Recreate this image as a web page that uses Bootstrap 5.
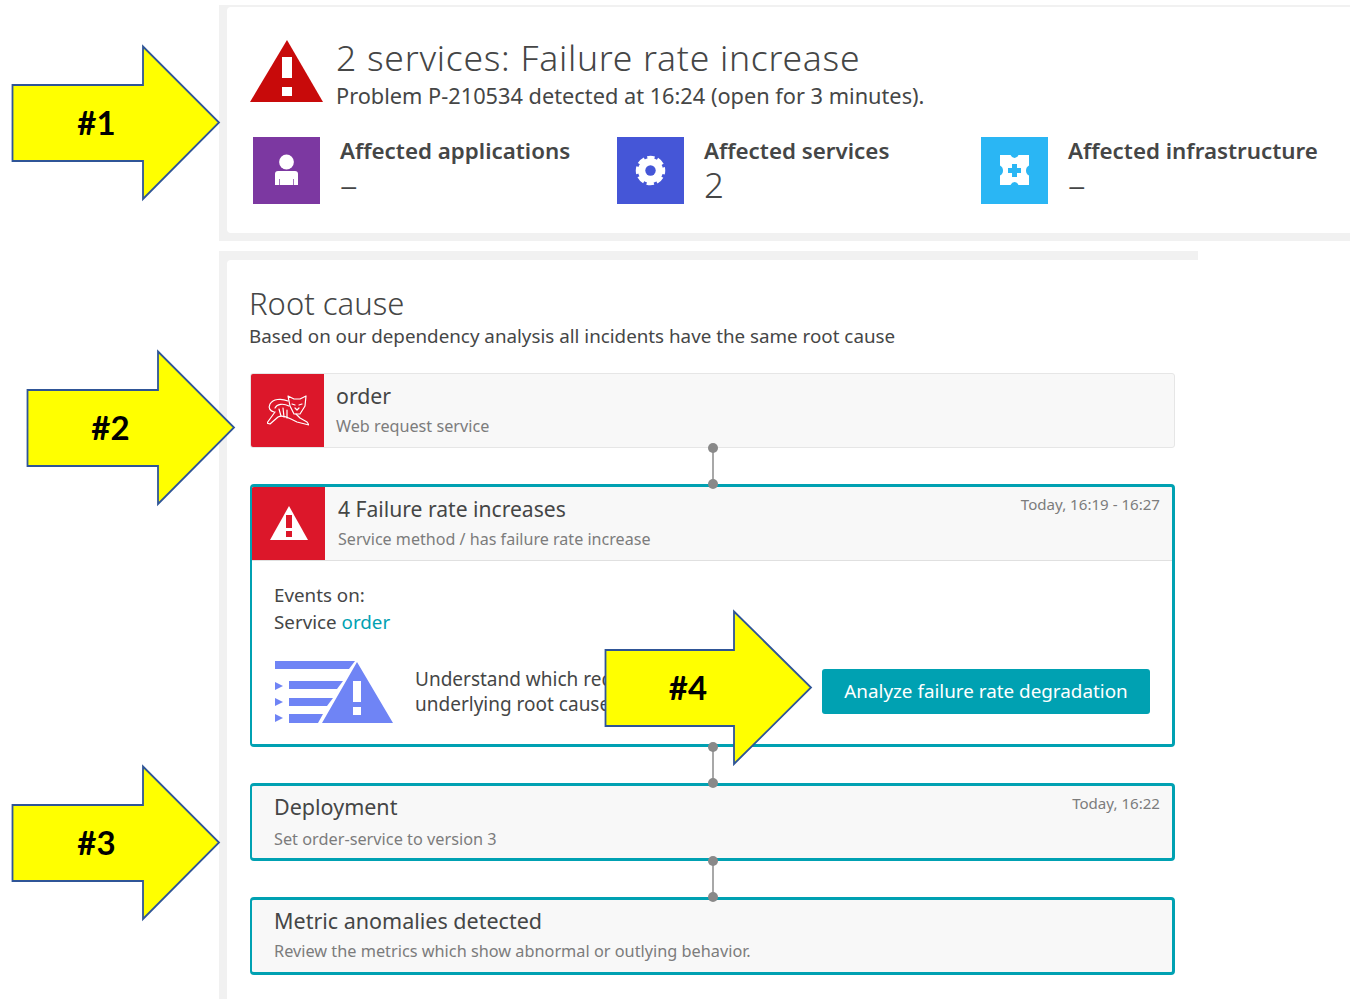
<!DOCTYPE html>
<html lang="en">
<head>
<meta charset="utf-8">
<title>Problem P-210534</title>
<link rel="stylesheet" href="https://cdn.jsdelivr.net/npm/bootstrap@5.3.0/dist/css/bootstrap.min.css">
<style>
html,body{height:999px;overflow:hidden}
body{background:#fff;font-family:"Noto Sans",sans-serif;color:#454646;position:relative}
.stage{padding:5px 0 0 219px;height:999px}
.summary-panel{background:#f1f1f1;padding:2px 0 8px 8px;margin-bottom:10px}
.summary-card{background:#fff;height:226px;border-radius:4px 0 0 4px;padding:29px 0 0 23px}
.title-text{font-size:35.500px;line-height:42px;font-weight:300;margin:0;letter-spacing:.73px}
.sub-text{font-size:21.750px;line-height:30px;margin-top:3px;color:#454646}
.alert-ico{width:74px;height:64px;flex:none;margin-right:12px;margin-top:4px}
.impact-row{margin-top:26px;padding-left:3px}
.impact-item{width:364px;flex:none}
.impact-ico{width:67px;height:67px;flex:none;margin-right:20px}
.impact-name{font-size:22.350px;line-height:28px;font-weight:600}
.impact-val{font-size:35px;line-height:40px;font-weight:300}
.cause-panel{background:#f1f1f1;width:979px;padding:9px 0 0 8px;height:748px}
.cause-card{background:#fff;height:739px;padding:22px 23px 0 23px;border-radius:4px 0 0 0}
.cause-title{font-size:31px;line-height:43px;font-weight:300;margin:0 0 0 -1px}
.cause-sub{font-size:18.800px;line-height:24px;margin:-1px 0 25px -1px}
.node{background:#f8f8f8;border:1px solid #e6e6e6;border-radius:3px;overflow:hidden}
.node-on{border:3px solid #00a1b2;border-left-width:2px;border-radius:4px}
.node-ico{width:73px;background:#dc172a;flex:none}
.node-name{font-size:21.300px;line-height:28px}
.node-desc{font-size:16.200px;line-height:22px;color:#7c7c7c}
.node-time{font-size:15.100px;line-height:20px;color:#7c7c7c}
.first-node{height:75px}
.first-text{padding:8px 0 0 12px}
.first-desc{margin-top:5px}
.fail-head{height:74px;border-bottom:1px solid #e0e0e0}
.fail-text{padding:8px 0 0 13px}
.fail-name{font-size:21.100px}
.fail-desc{font-size:16.100px;margin-top:5px}
.fail-time{padding:7px 12px 0 0}
.fail-body{background:#fff;height:183px;padding:21px 22px 0 22px}
.body-line{font-size:18.800px;line-height:27px}
.teal-link{color:#00a1b2;text-decoration:none}
.hint-row{margin-top:24px}
.hint-art{flex:none;margin-left:1px}
.hint-text{font-size:19px;line-height:25px;margin-left:22px;white-space:nowrap}
.teal-btn{background:#00a1b2;color:#fff;border:0;border-radius:3px;width:328px;height:45px;font-size:18.850px;padding:0;flex:none}
.teal-btn:hover{background:#00a1b2;color:#fff}
.link-gap{height:36px;align-items:center}
.link-dot{width:10px;height:10px;border-radius:50%;background:#898989;flex:none;margin:-5px 0;position:relative;z-index:2}
.link-line{width:2px;flex:1;background:#a8a8a8}
.plain-node{height:78px;padding:7px 12px 0 22px}
.plain-name{font-size:21.500px}
.plain-desc{font-size:16.300px;margin-top:7px}
.metric-desc{font-size:16.300px;margin-top:5px}
.arrow-mark{position:absolute;z-index:5}
.arrow-mark svg{display:block;overflow:visible}
.arrow-label{position:absolute;inset:0;font-family:Lato,sans-serif;font-weight:700;font-size:33px;color:#000;display:flex;align-items:center;justify-content:center}
.label-a{padding-right:38px}
.label-b{padding-right:40px}
.label-c{padding-right:38px}
.label-d{padding-right:40px}
</style>
</head>
<body>
<div class="stage">
  <section class="summary-panel">
    <div class="summary-card">
      <div class="d-flex">
        <svg class="alert-ico" viewBox="0 0 74 64"><path fill="#c80a0a" d="M37 0 73 62H0Z"/><path fill="#fff" d="M32 17H42V38H32ZM32 47H42V56H32Z"/></svg>
        <div>
          <h1 class="title-text">2 services: Failure rate increase</h1>
          <div class="sub-text">Problem P-210534 detected at 16:24 (open for 3 minutes).</div>
        </div>
      </div>
      <div class="d-flex impact-row">
        <div class="impact-item d-flex">
          <svg class="impact-ico" viewBox="0 0 67 67"><rect width="67" height="67" fill="#7c38a1"/><circle cx="33.500" cy="25" r="7.400" fill="#fff"/><path fill="#fff" d="M25 34H42Q45 34 45 37V48H22V37Q22 34 25 34Z"/><path stroke="#7c38a1" stroke-width=".7" d="M26.500 42V48M40.500 42V48"/></svg>
          <div><div class="impact-name">Affected applications</div><div class="impact-val">–</div></div>
        </div>
        <div class="impact-item d-flex">
          <svg class="impact-ico" viewBox="0 0 67 67"><rect width="67" height="67" fill="#4556d7"/><circle cx="33.500" cy="33.500" r="12.500" fill="#fff"/><circle cx="33.500" cy="33.500" r="13" fill="none" stroke="#fff" stroke-width="3.500" stroke-dasharray="7.200 3" stroke-dashoffset="3.500"/><circle cx="33.500" cy="33.500" r="5.200" fill="#4556d7"/></svg>
          <div><div class="impact-name">Affected services</div><div class="impact-val">2</div></div>
        </div>
        <div class="impact-item d-flex">
          <svg class="impact-ico" viewBox="0 0 67 67"><rect width="67" height="67" fill="#2ab6f4"/><path fill="#fff" d="M19 18H29.500Q31 21 33.500 21 36 21 37.500 18H48V28.500Q45 30 45 33.500 45 37 48 38.500V48H37.500Q36 45 33.500 45 31 45 29.500 48H19V38.500Q22 37 22 33.500 22 30 19 28.500Z"/><path fill="#2ab6f4" d="M31 27H36V31H40V36H36V40H31V36H27V31H31Z"/></svg>
          <div><div class="impact-name">Affected infrastructure</div><div class="impact-val">–</div></div>
        </div>
      </div>
    </div>
  </section>

  <section class="cause-panel">
    <div class="cause-card">
      <h2 class="cause-title">Root cause</h2>
      <div class="cause-sub">Based on our dependency analysis all incidents have the same root cause</div>

      <div class="node first-node d-flex">
        <div class="node-ico d-flex align-items-center justify-content-center">
          <svg width="42" height="31" viewBox="0 0 42 31" fill="none" stroke="#fff" stroke-width="1.200" stroke-linejoin="round" stroke-linecap="round"><path d="M21 1 27 4H33L39 1 38 11 33 19H27L23 11Z"/><path d="M25 9 28 10M32 10 35 9M28 13 30 15 32 13"/><path d="M21 6C14 3 6 4 3 9 1 13 3 16 7 17M22 11C16 8 10 9 8 13"/><path d="M8 17 0 28 3 29 11 22C15 20 20 22 24 24L30 27 42 30 40 27 33 23 29 19"/><path d="M12 14 14 21M16 13 17 22M20 15 20 23"/></svg>
        </div>
        <div class="first-text">
          <div class="node-name">order</div>
          <div class="node-desc first-desc">Web request service</div>
        </div>
      </div>

      <div class="link-gap d-flex flex-column"><span class="link-dot"></span><span class="link-line"></span><span class="link-dot"></span></div>

      <div class="node node-on">
        <div class="fail-head d-flex">
          <div class="node-ico d-flex align-items-center justify-content-center">
            <svg width="40" height="35" viewBox="0 0 40 35"><path fill="#fff" d="M20 0 39 34H1Z"/><path fill="#dc172a" d="M17 9H23V22H17ZM17 25H23V31H17Z"/></svg>
          </div>
          <div class="fail-text flex-grow-1">
            <div class="node-name fail-name">4 Failure rate increases</div>
            <div class="node-desc fail-desc">Service method / has failure rate increase</div>
          </div>
          <div class="node-time fail-time">Today, 16:19 - 16:27</div>
        </div>
        <div class="fail-body">
          <div class="body-line">Events on:</div>
          <div class="body-line">Service <a class="teal-link" href="#">order</a></div>
          <div class="d-flex align-items-center hint-row">
            <svg class="hint-art" width="118" height="63" viewBox="0 -1 118 63"><path fill="#6f84f5" d="M0 0H80L74 8H0ZM14 20H68L62 28H14ZM14 37H58L52 45H14ZM14 53H48L43 62H14ZM0 21 8 25 0 29ZM0 37 8 41 0 45ZM0 53 8 57 0 61ZM82 1 118 62H47Z"/><path fill="#fff" d="M78 20H86V41H78ZM78 46H86V54H78Z"/></svg>
            <div class="hint-text">Understand which requests are affected<br>underlying root cause</div>
            <button type="button" class="btn teal-btn ms-auto">Analyze failure rate degradation</button>
          </div>
        </div>
      </div>

      <div class="link-gap d-flex flex-column"><span class="link-dot"></span><span class="link-line"></span><span class="link-dot"></span></div>

      <div class="node node-on plain-node d-flex justify-content-between">
        <div>
          <div class="node-name plain-name">Deployment</div>
          <div class="node-desc plain-desc">Set order-service to version 3</div>
        </div>
        <div class="node-time">Today, 16:22</div>
      </div>

      <div class="link-gap d-flex flex-column"><span class="link-dot"></span><span class="link-line"></span><span class="link-dot"></span></div>

      <div class="node node-on plain-node">
        <div class="node-name plain-name">Metric anomalies detected</div>
        <div class="node-desc metric-desc">Review the metrics which show abnormal or outlying behavior.</div>
      </div>
    </div>
  </section>
</div>

<div class="arrow-mark" style="left:12px;top:46px;width:207px;height:153px">
  <svg width="207" height="153"><path d="M0.500 39H131V0.500L207 76.500 131 153V115H0.500Z" fill="#ffff00" stroke="#2f5597" stroke-width="1.800"/></svg>
  <div class="arrow-label label-a">#1</div>
</div>
<div class="arrow-mark" style="left:27px;top:351px;width:207px;height:153px">
  <svg width="207" height="153"><path d="M0.500 39H131V0.500L207 76.500 131 153V115H0.500Z" fill="#ffff00" stroke="#2f5597" stroke-width="1.800"/></svg>
  <div class="arrow-label label-b">#2</div>
</div>
<div class="arrow-mark" style="left:12px;top:766px;width:207px;height:153px">
  <svg width="207" height="153"><path d="M0.500 39H131V0.500L207 76.500 131 153V115H0.500Z" fill="#ffff00" stroke="#2f5597" stroke-width="1.800"/></svg>
  <div class="arrow-label label-c">#3</div>
</div>
<div class="arrow-mark" style="left:605px;top:611px;width:206px;height:153px">
  <svg width="206" height="153"><path d="M0.500 39H129V0.500L206 76.500 129 153V115H0.500Z" fill="#ffff00" stroke="#2f5597" stroke-width="1.800"/></svg>
  <div class="arrow-label label-d">#4</div>
</div>
</body>
</html>
